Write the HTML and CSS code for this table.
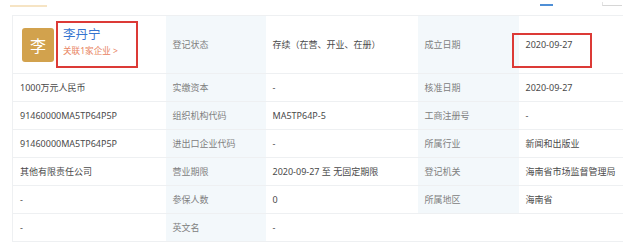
FILE: index.html
```html
<!DOCTYPE html>
<html lang="zh-CN">
<head>
  <meta charset="UTF-8" />
  <title>工商信息</title>
  <link rel="stylesheet" href="styles.css">
</head>
<body>
  <div class="tabs">
    <span class="tab-gold"></span>
    <span class="tab-blue"></span>
    <span class="tab-gray"></span>
  </div>

  <table class="info-table">
    <colgroup>
      <col class="c-val1">
      <col class="c-label">
      <col class="c-val2">
      <col class="c-label2">
      <col class="c-val3">
    </colgroup>
    <tr class="head-row">
      <td>
        <div class="person">
          <div class="avatar">李</div>
          <div class="person-box">
            <div class="person-name">李丹宁</div>
            <div class="person-link">关联1家企业 &gt;</div>
          </div>
        </div>
      </td>
      <td class="label">登记状态</td>
      <td>存续（在营、开业、在册）</td>
      <td class="label">成立日期</td>
      <td class="marked">2020-09-27<span class="mark-box"></span></td>
    </tr>
    <tr>
      <td>1000万元人民币</td>
      <td class="label">实缴资本</td>
      <td>-</td>
      <td class="label">核准日期</td>
      <td>2020-09-27</td>
    </tr>
    <tr>
      <td>91460000MA5TP64P5P</td>
      <td class="label">组织机构代码</td>
      <td>MA5TP64P-5</td>
      <td class="label">工商注册号</td>
      <td>-</td>
    </tr>
    <tr>
      <td>91460000MA5TP64P5P</td>
      <td class="label">进出口企业代码</td>
      <td>-</td>
      <td class="label">所属行业</td>
      <td>新闻和出版业</td>
    </tr>
    <tr>
      <td>其他有限责任公司</td>
      <td class="label">营业期限</td>
      <td>2020-09-27 至 无固定期限</td>
      <td class="label">登记机关</td>
      <td>海南省市场监督管理局</td>
    </tr>
    <tr>
      <td>-</td>
      <td class="label">参保人数</td>
      <td>0</td>
      <td class="label">所属地区</td>
      <td>海南省</td>
    </tr>
    <tr>
      <td>-</td>
      <td class="label">英文名</td>
      <td>-</td>
      <td class="empty"></td>
      <td class="empty"></td>
    </tr>
  </table>
</body>
</html>
```

FILE: styles.css
```css
body {
  margin: 0;
  background: #fff;
  font-family: "Noto Sans", "Noto Sans CJK SC", sans-serif;
  color: #555;
}

.tabs {
  height: 15px;
  display: flex;
  align-items: flex-start;
}

.tab-gold {
  margin: 5px 0 0 10px;
  width: 37px;
  height: 2px;
  background: #f6e4c4;
}

.tab-blue {
  margin: 4px 0 0 493px;
  width: 13px;
  height: 2px;
  background: #4f8fd6;
}

.tab-gray {
  margin: 2px 0 0 49px;
  width: 20px;
  height: 4px;
  border-left: 1px solid #e2e2e2;
  border-bottom: 1px solid #d6d6d6;
  box-sizing: border-box;
}

.info-table {
  margin-left: 12px;
  width: 610px;
  border-collapse: collapse;
  table-layout: fixed;
  font-size: 9px;
}

.c-val1 { width: 153px; }
.c-label { width: 100px; }
.c-val2 { width: 152px; }
.c-label2 { width: 101px; }
.c-val3 { width: 104px; }

.info-table td {
  height: 27px;
  padding: 0 7px;
  border-top: 1px solid #eef0f2;
  border-bottom: 1px solid #eef0f2;
  white-space: nowrap;
  color: #4a4a4a;
}

.info-table tr td:first-child {
  border-left: 1px solid #eef0f2;
}

.info-table .label {
  background: #f3f8fb;
  color: #808080;
}

.info-table td.empty {
  background: #fff;
}

.head-row td {
  height: 57px;
}

.person {
  display: flex;
  align-items: center;
}

.avatar {
  width: 32px;
  height: 34px;
  margin-left: 2px;
  border-radius: 3px;
  background: #d2a24d;
  color: #fff;
  font-size: 16px;
  display: flex;
  align-items: center;
  justify-content: center;
}

.person-box {
  margin-left: 2px;
  width: 82px;
  height: 47px;
  box-sizing: border-box;
  border: 2px solid #dc3a36;
  padding: 4px 0 0 5px;
}

.person-name {
  font-size: 12.5px;
  line-height: 16px;
  color: #3674cf;
}

.person-link {
  margin-top: 3px;
  font-size: 8.6px;
  line-height: 11px;
  color: #e8835e;
}

.marked {
  position: relative;
}

.mark-box {
  position: absolute;
  left: -7px;
  top: 17px;
  width: 80px;
  height: 35px;
  box-sizing: border-box;
  border: 2px solid #dc3a36;
}
```
